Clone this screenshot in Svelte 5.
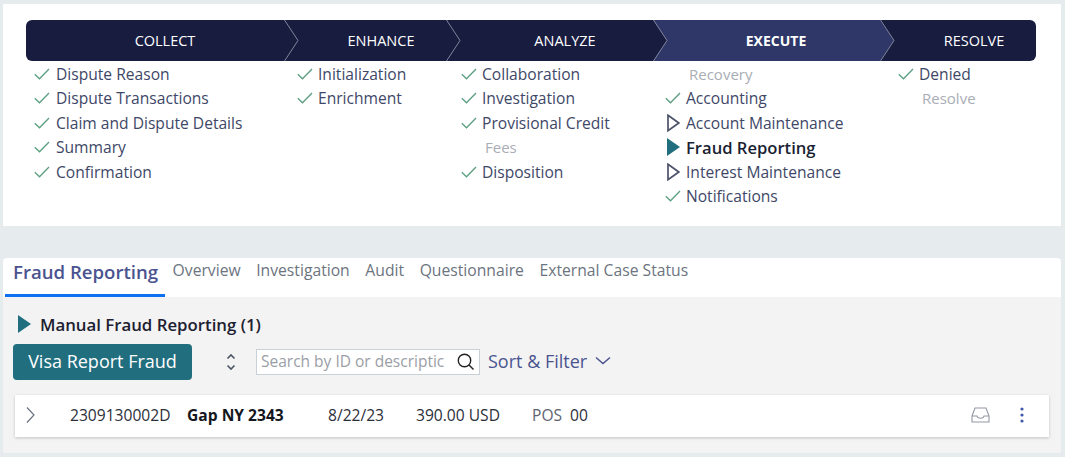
<script>
  const stages = [
    { name: 'COLLECT', width: 258, inset: 20 },
    { name: 'ENHANCE', width: 162, inset: 32 },
    { name: 'ANALYZE', width: 207, inset: 31 },
    { name: 'EXECUTE', width: 227, inset: 19, current: true },
    { name: 'RESOLVE', width: 156, inset: 32 }
  ];

  const columns = [
    { width: 263, steps: [['done', 'Dispute Reason'], ['done', 'Dispute Transactions'], ['done', 'Claim and Dispute Details'], ['done', 'Summary'], ['done', 'Confirmation']] },
    { width: 164, steps: [['done', 'Initialization'], ['done', 'Enrichment']] },
    { width: 204, steps: [['done', 'Collaboration'], ['done', 'Investigation'], ['done', 'Provisional Credit'], ['skip', 'Fees'], ['done', 'Disposition']] },
    { width: 233, steps: [['skip', 'Recovery'], ['done', 'Accounting'], ['open', 'Account Maintenance'], ['active', 'Fraud Reporting'], ['open', 'Interest Maintenance'], ['done', 'Notifications']] },
    { width: 138, steps: [['done', 'Denied'], ['skip', 'Resolve']] }
  ];

  const tabs = ['Overview', 'Investigation', 'Audit', 'Questionnaire', 'External Case Status'];
</script>

<main class="page">
  <section class="stages-card">
    <div class="bar">
      {#each stages as stage, i}
        <div class="stage" class:current={stage.current} style="width:{stage.width}px;padding-left:{stage.inset}px">
          <span class="stage-name">{stage.name}</span>
          {#if i < stages.length - 1}
            <svg class="sep" width="15" height="41" viewBox="0 0 15 41"><path d="M0.5 0 L14 20.5 L0.5 41" fill="none" stroke="#80859c" stroke-width="1" /></svg>
          {/if}
        </div>
      {/each}
    </div>
    <div class="lists">
      {#each columns as col}
        <ul class="steps" style="width:{col.width}px">
          {#each col.steps as [status, label]}
            <li class="step {status}">
              <span class="mark">
                {#if status === 'done'}
                  <svg width="16" height="12" viewBox="0 0 16 12"><path d="M0.8 6.2 L5.5 10.8 L15 1" fill="none" stroke="#5b9f80" stroke-width="1.3" /></svg>
                {:else if status === 'open'}
                  <svg width="13" height="18" viewBox="0 0 13 18"><path d="M1 1.3 L11.8 9 L1 16.7 Z" fill="none" stroke="#4d5269" stroke-width="1.7" /></svg>
                {:else if status === 'active'}
                  <svg width="13" height="18" viewBox="0 0 13 18"><path d="M0 0 L13 9 L0 18 Z" fill="#216e7f" /></svg>
                {/if}
              </span>
              <span>{label}</span>
            </li>
          {/each}
        </ul>
      {/each}
    </div>
  </section>

  <section class="work-card">
    <nav class="tabs">
      <span class="tab active">Fraud Reporting</span>
      {#each tabs as tab}
        <span class="tab">{tab}</span>
      {/each}
    </nav>
    <div class="panel">
      <h3 class="group">
        <svg width="13" height="18" viewBox="0 0 13 18"><path d="M0 0 L13 9 L0 18 Z" fill="#216e7f" /></svg>
        Manual Fraud Reporting (1)
      </h3>
      <div class="toolbar">
        <button class="primary">Visa Report Fraud</button>
        <svg class="sort" width="10" height="18" viewBox="0 0 10 18"><path d="M1.5 5.5 L5 2 L8.5 5.5 M1.5 12.5 L5 16 L8.5 12.5" fill="none" stroke="#4b5563" stroke-width="1.6" /></svg>
        <div class="search">
          <span class="placeholder">Search by ID or descriptic</span>
          <svg width="19" height="19" viewBox="0 0 19 19"><circle cx="8.5" cy="8.5" r="6.2" fill="none" stroke="#222" stroke-width="1.4" /><path d="M13 13 L17.5 17.5" stroke="#222" stroke-width="1.4" /></svg>
        </div>
        <span class="sort-filter">Sort &amp; Filter
          <svg width="16" height="9" viewBox="0 0 16 9"><path d="M1 1.5 L8 7.5 L15 1.5" fill="none" stroke="#4a5390" stroke-width="1.5" /></svg>
        </span>
      </div>
      <div class="row">
        <svg class="expand" width="9" height="16" viewBox="0 0 9 16"><path d="M1 0.5 L8 8 L1 15.5" fill="none" stroke="#6b7280" stroke-width="1.2" /></svg>
        <span class="id">2309130002D</span>
        <strong class="merchant">Gap NY 2343</strong>
        <span class="date">8/22/23</span>
        <span class="amount">390.00 USD</span>
        <span class="pos">POS</span>
        <span class="code">00</span>
        <svg class="inbox" width="19" height="16" viewBox="0 0 19 16"><path d="M1 9 L4 1 H15 L18 9 V15 H1 Z M1 9 H6 C6.5 12 12.5 12 13 9 H18" fill="none" stroke="#9298a3" stroke-width="1.1" /></svg>
        <svg class="more" width="4" height="16" viewBox="0 0 4 16"><circle cx="2" cy="2" r="1.6" fill="#3f5aa8" /><circle cx="2" cy="8" r="1.6" fill="#3f5aa8" /><circle cx="2" cy="14" r="1.6" fill="#3f5aa8" /></svg>
      </div>
    </div>
  </section>
</main>

<style>
  :global(body) {
    margin: 0;
    background: #e6ebee;
    font-family: 'Open Sans', 'Noto Sans', sans-serif;
  }

  .page {
    height: 457px;
    padding: 4px 4px 4px 3px;
    box-sizing: border-box;
    display: flex;
    flex-direction: column;
    gap: 32px;
    overflow: hidden;
  }

  .stages-card {
    height: 222px;
    box-sizing: border-box;
    background: #fff;
    padding: 16px 0 0 23px;
  }

  .bar {
    display: flex;
    width: 1010px;
    height: 41px;
    background: #181c3f;
    border-radius: 6px;
  }

  .stage {
    position: relative;
    box-sizing: border-box;
    display: flex;
    align-items: center;
    justify-content: center;
    color: #fff;
    font-size: 14.5px;
  }

  .stage-name {
    position: relative;
    z-index: 1;
  }

  .stage.current {
    font-weight: 700;
    font-size: 14px;
  }

  .stage.current::before {
    content: '';
    position: absolute;
    top: 0;
    bottom: 0;
    left: 0;
    right: -14px;
    background: #2e3768;
    clip-path: polygon(0 0, calc(100% - 14px) 0, 100% 50%, calc(100% - 14px) 100%, 0 100%, 14px 50%);
  }

  .sep {
    position: absolute;
    top: 0;
    left: 100%;
    z-index: 1;
  }

  .lists {
    display: flex;
    padding-top: 0.5px;
  }

  .steps {
    list-style: none;
    margin: 0;
    padding: 0 0 0 8px;
    box-sizing: border-box;
  }

  .step {
    display: flex;
    align-items: center;
    height: 24.5px;
    font-size: 15.6px;
    color: #3e4767;
  }

  .mark {
    width: 21px;
    flex-shrink: 0;
    display: flex;
    align-items: center;
  }

  .steps:first-child .mark {
    width: 22px;
  }

  .step.skip {
    color: #a9adb5;
    font-size: 15px;
  }

  .step.skip .mark {
    width: 24px;
  }

  .step.active {
    color: #1a1f33;
    font-weight: 600;
    font-size: 16.6px;
  }

  .step.open .mark,
  .step.active .mark {
    padding-left: 2px;
    width: 19px;
  }

  .work-card {
    flex: 1;
    display: flex;
    flex-direction: column;
    background: #fff;
    border-radius: 4px 4px 0 0;
    overflow: hidden;
  }

  .tabs {
    height: 39px;
    flex-shrink: 0;
    display: flex;
    padding-left: 2px;
    gap: 15.6px;
  }

  .tab {
    font-size: 15.7px;
    color: #6c7480;
    padding-top: 1px;
    line-height: 22px;
  }

  .tab.active {
    box-sizing: border-box;
    width: 160px;
    margin-right: -8px;
    padding: 3px 0 0 8px;
    height: 39px;
    border-bottom: 3px solid #0e6ff0;
    font-size: 18.6px;
    font-weight: 600;
    color: #4a5390;
  }

  .panel {
    flex: 1;
    background: #f3f3f3;
    padding: 16px 12px 0 10px;
  }

  .group {
    display: flex;
    align-items: center;
    gap: 9px;
    margin: 0 0 0 5px;
    height: 22px;
    font-size: 16.8px;
    font-weight: 600;
    color: #1c2030;
  }

  .toolbar {
    display: flex;
    align-items: center;
    height: 36px;
    margin-top: 9px;
  }

  .primary {
    width: 179px;
    height: 36px;
    border: none;
    border-radius: 4px;
    background: #216e7f;
    color: #fff;
    font: 500 18px 'Open Sans', sans-serif;
    padding: 0 0 2px;
  }

  .sort {
    margin: 0 20px 0 34px;
  }

  .search {
    box-sizing: border-box;
    width: 224px;
    height: 26px;
    display: flex;
    align-items: center;
    justify-content: space-between;
    background: #fff;
    border: 1px solid #c9d0d6;
    padding: 0 4px 2px 4px;
  }

  .placeholder {
    font-size: 15.5px;
    color: #9a9ea6;
    white-space: nowrap;
    overflow: hidden;
    width: 186px;
  }

  .sort-filter {
    margin: -3px 0 0 8px;
    display: flex;
    align-items: center;
    gap: 8px;
    font-size: 18px;
    color: #4a5390;
  }

  .row {
    display: flex;
    align-items: center;
    height: 42px;
    margin: 15px 0 0 2px;
    padding: 0 0 2px 11px;
    box-sizing: border-box;
    background: #fff;
    box-shadow: 0 1px 3px rgba(0, 0, 0, 0.2);
    font-size: 15.6px;
    color: #2b2f3a;
  }

  .id { margin-left: 35px; width: 117px; }
  .merchant { width: 141px; color: #15171f; }
  .date { width: 88px; }
  .amount { width: 116px; }
  .pos { width: 38px; color: #5d6470; }
  .code { width: 401px; }
  .more { margin-left: 30px; }
</style>
